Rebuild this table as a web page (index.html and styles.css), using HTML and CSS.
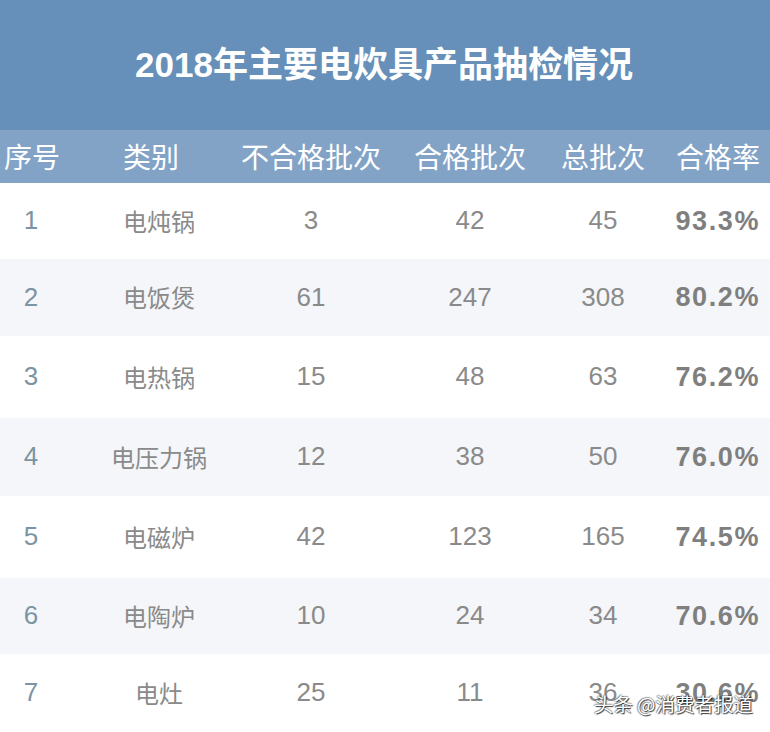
FILE: index.html
```html
<!DOCTYPE html>
<html lang="zh">
<head>
<meta charset="utf-8">
<title>2018年主要电炊具产品抽检情况</title>
<link rel="stylesheet" href="styles.css">
</head>
<body>
<div class="page">
  <header class="title-band">
    <h1 class="title">2018年主要电炊具产品抽检情况</h1>
  </header>
  <div class="table">
    <div class="row head">
      <div class="cell c1">序号</div>
      <div class="cell c2 h2">类别</div>
      <div class="cell c3">不合格批次</div>
      <div class="cell c4">合格批次</div>
      <div class="cell c5">总批次</div>
      <div class="cell c6">合格率</div>
    </div>
    <div class="row r1">
      <div class="cell c1 idx">1</div>
      <div class="cell c2 cat">电炖锅</div>
      <div class="cell c3 num">3</div>
      <div class="cell c4 num">42</div>
      <div class="cell c5 num">45</div>
      <div class="cell c6 pct">93.3%</div>
    </div>
    <div class="row r2 alt">
      <div class="cell c1 idx">2</div>
      <div class="cell c2 cat">电饭煲</div>
      <div class="cell c3 num">61</div>
      <div class="cell c4 num">247</div>
      <div class="cell c5 num">308</div>
      <div class="cell c6 pct">80.2%</div>
    </div>
    <div class="row r3">
      <div class="cell c1 idx">3</div>
      <div class="cell c2 cat">电热锅</div>
      <div class="cell c3 num">15</div>
      <div class="cell c4 num">48</div>
      <div class="cell c5 num">63</div>
      <div class="cell c6 pct">76.2%</div>
    </div>
    <div class="row r4 alt">
      <div class="cell c1 idx">4</div>
      <div class="cell c2 cat">电压力锅</div>
      <div class="cell c3 num">12</div>
      <div class="cell c4 num">38</div>
      <div class="cell c5 num">50</div>
      <div class="cell c6 pct">76.0%</div>
    </div>
    <div class="row r5">
      <div class="cell c1 idx">5</div>
      <div class="cell c2 cat">电磁炉</div>
      <div class="cell c3 num">42</div>
      <div class="cell c4 num">123</div>
      <div class="cell c5 num">165</div>
      <div class="cell c6 pct">74.5%</div>
    </div>
    <div class="row r6 alt">
      <div class="cell c1 idx">6</div>
      <div class="cell c2 cat">电陶炉</div>
      <div class="cell c3 num">10</div>
      <div class="cell c4 num">24</div>
      <div class="cell c5 num">34</div>
      <div class="cell c6 pct">70.6%</div>
    </div>
    <div class="row r7">
      <div class="cell c1 idx">7</div>
      <div class="cell c2 cat">电灶</div>
      <div class="cell c3 num">25</div>
      <div class="cell c4 num">11</div>
      <div class="cell c5 num">36</div>
      <div class="cell c6 pct">30.6%</div>
    </div>
  </div>
  <div class="watermark">头条 @消费者报道</div>
</div>
</body>
</html>
```

FILE: styles.css
```css
* { box-sizing: border-box; margin: 0; padding: 0; }
html, body { width: 770px; height: 732px; overflow: hidden; background: #ffffff; }
body { font-family: "Liberation Sans", "Noto Sans CJK SC", sans-serif; }
.page { position: relative; width: 770px; height: 732px; display: flex; flex-direction: column; }
.title-band {
  height: 130px;
  background: #6690b9;
  display: flex;
  align-items: center;
  justify-content: center;
}
.title {
  color: #ffffff;
  font-family: "Liberation Sans", "Noto Sans CJK SC", sans-serif;
  font-weight: 700;
  font-size: 35px;
  line-height: 1;
  padding-bottom: 2px;
  padding-right: 2px;
}
.table { display: flex; flex-direction: column; }
.row {
  display: grid;
  grid-template-columns: 64px 190px 114px 204px 62px 136px;
  align-items: center;
}
.row.head { height: 53px; background: #82a3c6; color: #ffffff; font-family: "Noto Sans CJK SC", sans-serif; font-size: 28px; }
.r1 { height: 76px; }
.r2 { height: 77px; }
.r3 { height: 82px; }
.r4 { height: 78px; }
.r5 { height: 82px; }
.r6 { height: 76px; }
.r7 { height: 78px; }
.alt { background: #f4f6f9; }
.cell {
  display: flex;
  justify-content: center;
  white-space: nowrap;
  line-height: 1.2;
}
.c6 { justify-content: flex-end; padding-right: 10px; }
.head .cell { line-height: 1.3; }
.h2 { padding-right: 16px; }
.idx { color: #7b94a3; font-size: 26px; padding-right: 2px; }
.cat { color: #8a8a8a; font-family: "Noto Sans CJK SC", sans-serif; font-size: 24px; }
.num { color: #8a8a8a; font-size: 26px; }
.pct { color: #7f7f7f; font-size: 27px; font-weight: 700; letter-spacing: 1.6px; }
.watermark {
  position: absolute;
  right: 17px;
  bottom: 17px;
  color: #ffffff;
  font-family: "Noto Sans CJK SC", sans-serif;
  font-size: 19.5px;
  line-height: 1.2;
  text-shadow: 1px 1px 1px rgba(0,0,0,0.8), -1px 0 1px rgba(0,0,0,0.45), 0 -1px 1px rgba(0,0,0,0.35);
}
```
